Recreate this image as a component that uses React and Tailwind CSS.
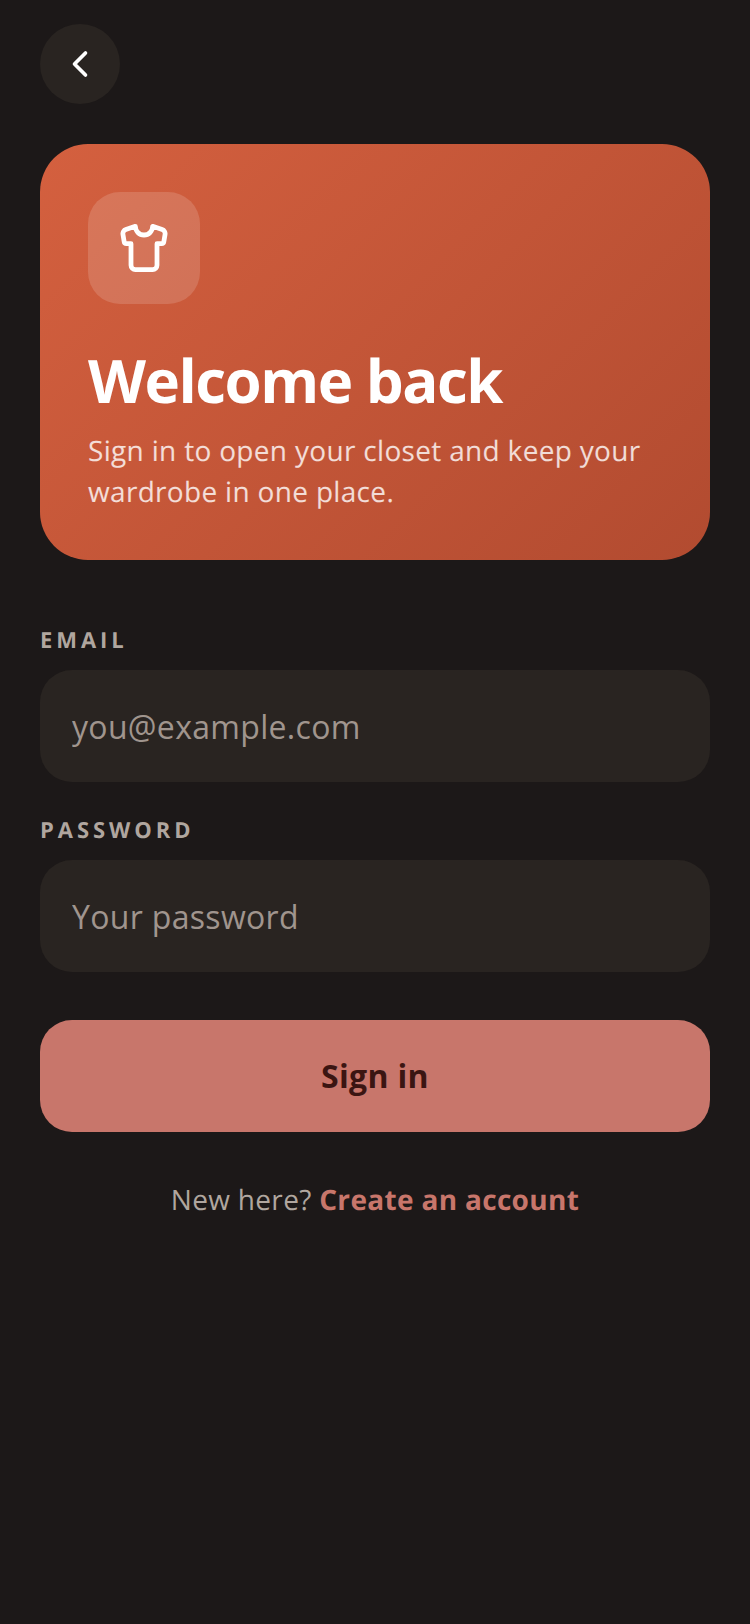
import React from 'react';
import { ChevronLeft, Shirt } from 'lucide-react';

const Field = ({ label, type, placeholder, className = '' }) => (
  <label className={`block ${className}`}>
    <span className="block text-[22px] leading-[30px] font-bold tracking-[0.18em] text-[#b0a69f] uppercase">{label}</span>
    <input
      type={type}
      placeholder={placeholder}
      className="mt-[15px] block w-full h-[112px] rounded-[32px] bg-[#292421] px-[32px] text-[32px] tracking-[0.01em] text-[#f5f0eb] placeholder:text-[#a0958e] outline-none"
    />
  </label>
);

const App = () => {
  return (
    <div className="min-h-[1624px] bg-[#1c1818] px-[40px] pt-[24px] font-['Open_Sans',sans-serif] antialiased [text-rendering:geometricPrecision]">
      <button className="flex items-center justify-center w-[80px] h-[80px] rounded-full bg-[#292421] text-white">
        <ChevronLeft size={44} strokeWidth={2} />
      </button>

      <div className="mt-[40px] rounded-[48px] bg-[linear-gradient(135deg,#d4603f,#b24b30)] px-[48px] pt-[48px] pb-[48px]">
        <div className="flex items-center justify-center w-[112px] h-[112px] rounded-[32px] bg-white/15 text-white">
          <Shirt size={52} strokeWidth={2.2} />
        </div>
        <h1 className="mt-[36px] text-[60px] leading-[80px] font-bold tracking-[-0.025em] text-white">Welcome back</h1>
        <p className="mt-[11px] text-[28px] leading-[40.6px] tracking-[0.32px] text-white/80">
          Sign in to open your closet and keep your wardrobe in one place.
        </p>
      </div>

      <form className="mt-[65px]">
        <Field label="Email" type="email" placeholder="you@example.com" />
        <Field label="Password" type="password" placeholder="Your password" className="mt-[33px]" />
        <button type="button" className="mt-[48px] block w-full h-[112px] rounded-[32px] bg-[#c8766b] text-[32px] tracking-[0.01em] font-bold text-[#3b1512]">
          Sign in
        </button>
      </form>

      <p className="mt-[48px] text-center text-[28px] leading-[40px] tracking-[0.32px] text-[#b0a69f]">
        New here? <a href="#" className="font-bold text-[#c8766b]">Create an account</a>
      </p>
    </div>
  );
};

export default App;
